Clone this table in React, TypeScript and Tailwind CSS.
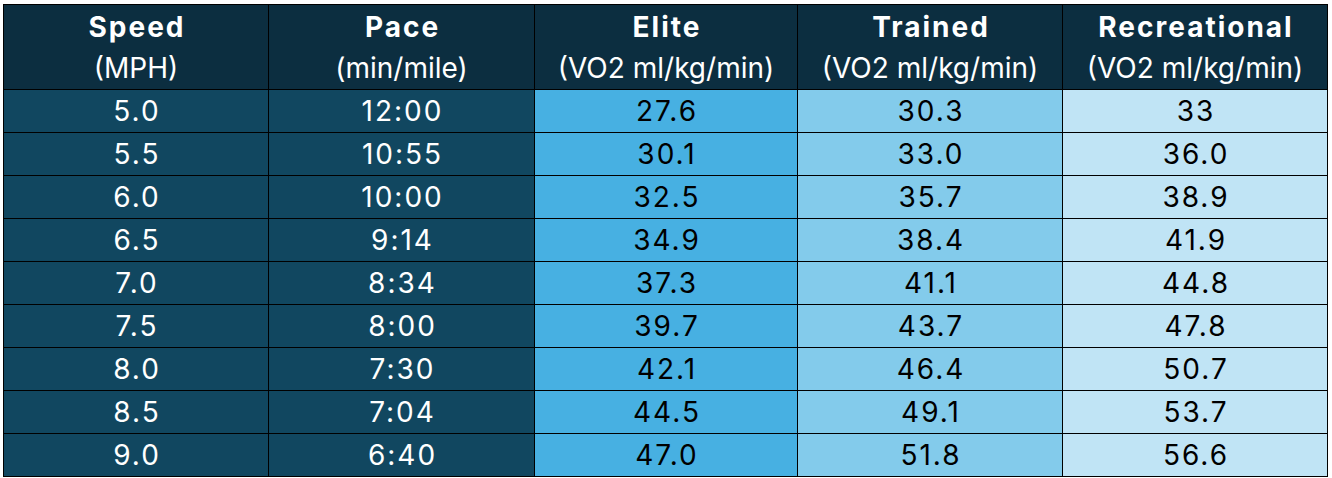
const rows = [
  ["5.0", "12:00", "27.6", "30.3", "33"],
  ["5.5", "10:55", "30.1", "33.0", "36.0"],
  ["6.0", "10:00", "32.5", "35.7", "38.9"],
  ["6.5", "9:14", "34.9", "38.4", "41.9"],
  ["7.0", "8:34", "37.3", "41.1", "44.8"],
  ["7.5", "8:00", "39.7", "43.7", "47.8"],
  ["8.0", "7:30", "42.1", "46.4", "50.7"],
  ["8.5", "7:04", "44.5", "49.1", "53.7"],
  ["9.0", "6:40", "47.0", "51.8", "56.6"],
];

const headers = [
  ["Speed", "(MPH)"],
  ["Pace", "(min/mile)"],
  ["Elite", "(VO2 ml/kg/min)"],
  ["Trained", "(VO2 ml/kg/min)"],
  ["Recreational", "(VO2 ml/kg/min)"],
];

const cellColors = [
  "bg-[#114760] text-white",
  "bg-[#114760] text-white",
  "bg-[#47b0e2] text-black",
  "bg-[#83cbeb] text-black",
  "bg-[#c0e4f5] text-black",
];

export default function App() {
  return (
    <div className="h-[478px] w-[1332px] bg-white pl-[3px] pt-[4px] font-['Inter','Liberation_Sans',sans-serif]">
      <table className="table-fixed border-collapse text-[28px]">
        <colgroup>
          <col className="w-[265px]" />
          <col className="w-[266px]" />
          <col className="w-[263px]" />
          <col className="w-[265px]" />
          <col className="w-[265px]" />
        </colgroup>
        <thead>
          <tr className="h-[84px]">
            {headers.map(([title, unit]) => (
              <th
                key={title}
                className="border border-black bg-[#0c2e40] p-0 pt-[2px] text-center align-middle font-normal leading-[41px] text-white"
              >
                <div className="pl-[2px] font-bold tracking-[2px]">{title}</div>
                <div>{unit}</div>
              </th>
            ))}
          </tr>
        </thead>
        <tbody>
          {rows.map((row) => (
            <tr key={row[0]} className="h-[43px]">
              {row.map((val, i) => (
                <td
                  key={i}
                  className={`border border-black p-0 pl-[2px] text-center align-middle leading-none tracking-[2px] ${cellColors[i]}`}
                >
                  {val}
                </td>
              ))}
            </tr>
          ))}
        </tbody>
      </table>
    </div>
  );
}
